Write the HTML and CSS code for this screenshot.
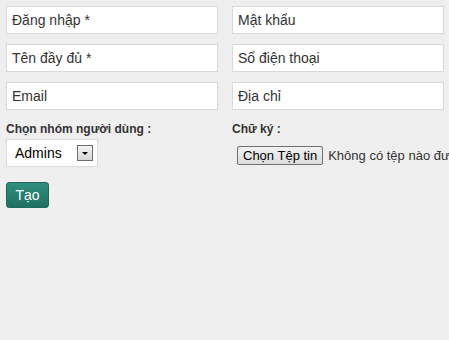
FILE: index.html
```html
<!DOCTYPE html>
<html lang="vi">
  <head>
    <meta charset="UTF-8" />
    <meta name="viewport" content="width=device-width, initial-scale=1.0" />
    <title>Tạo người dùng</title>
    <link rel="stylesheet" href="styles.css">
  </head>
  <body>
    <form id="userForm" class="user-form" novalidate>
      <div class="fields">
        <input type="text" class="field" placeholder="Đăng nhập *" />
        <input type="password" class="field" placeholder="Mật khẩu" />
        <input type="text" class="field" placeholder="Tên đầy đủ *" />
        <input type="text" class="field" placeholder="Số điện thoại" />
        <input type="email" class="field" placeholder="Email" />
        <input type="text" class="field" placeholder="Địa chỉ" />

        <div class="group">
          <label class="label" for="group">Chọn nhóm người dùng :</label>
          <div class="select">
            <select id="group">
              <option>Admins</option>
              <option>Users</option>
            </select>
            <span class="arrow"></span>
          </div>
        </div>

        <div class="group">
          <span class="label">Chữ ký :</span>
          <div class="file">
            <label class="file-btn" for="signature">Chọn Tệp tin</label>
            <span class="file-name">Không có tệp nào được chọn</span>
            <input type="file" id="signature" class="file-input" />
          </div>
        </div>
      </div>

      <button type="submit" class="btn">Tạo</button>
    </form>
  </body>
</html>
```

FILE: styles.css
```css
body {
  margin: 0;
  background-color: #efefef;
  font-family: "Liberation Sans", Arial, sans-serif;
  color: #333;
  overflow: hidden;
}

.user-form {
  padding: 6px;
}

.fields {
  display: grid;
  grid-template-columns: 212px 212px;
  column-gap: 14px;
  row-gap: 10px;
}

.field {
  box-sizing: border-box;
  width: 212px;
  height: 28px;
  margin: 0;
  padding: 0 5px;
  font-family: inherit;
  font-size: 14px;
  color: #333;
  background: #fff;
  border: 1px solid #d9d9d9;
  outline: none;
}

.field::placeholder {
  color: #333;
  opacity: 1;
}

.group {
  padding-top: 2px;
  white-space: nowrap;
}

.label {
  display: block;
  font-size: 12px;
  font-weight: bold;
  color: #333;
  margin-bottom: 3px;
}

.select {
  display: flex;
  align-items: center;
  box-sizing: border-box;
  width: 92px;
  height: 28px;
  background: #fff;
  border: 1px solid #dcdcdc;
}

.select select {
  flex: 1;
  min-width: 0;
  height: 100%;
  padding: 0 0 0 8px;
  border: none;
  outline: none;
  background: transparent;
  appearance: none;
  font-family: inherit;
  font-size: 14px;
  color: #000;
}

.arrow {
  position: relative;
  box-sizing: border-box;
  width: 16px;
  height: 16px;
  margin-right: 4px;
  border: 1px solid #6e6e6e;
  background: linear-gradient(#f4f4f4, #d8d8d8);
}

.arrow::after {
  content: "";
  position: absolute;
  left: 4px;
  top: 6px;
  border-left: 3px solid transparent;
  border-right: 3px solid transparent;
  border-top: 3px solid #000;
}

.file {
  display: flex;
  align-items: center;
  padding-left: 5px;
  margin-top: 10px;
}

.file-btn {
  box-sizing: border-box;
  height: 19px;
  padding: 0 5px;
  line-height: 17px;
  font-size: 13px;
  color: #000;
  border: 1px solid #707070;
  border-radius: 2px;
  background: linear-gradient(#f2f2f2, #dcdcdc);
}

.file-name {
  margin-left: 5px;
  font-size: 13px;
  color: #333;
}

.file-input {
  display: none;
}

.btn {
  margin-top: 15px;
  width: 43px;
  height: 26px;
  padding: 0;
  font-family: inherit;
  font-size: 14px;
  color: #fff;
  border: 1px solid #1d6b5d;
  border-radius: 3px;
  background: linear-gradient(#2f8f7e, #1f6f61);
  cursor: pointer;
}
```
